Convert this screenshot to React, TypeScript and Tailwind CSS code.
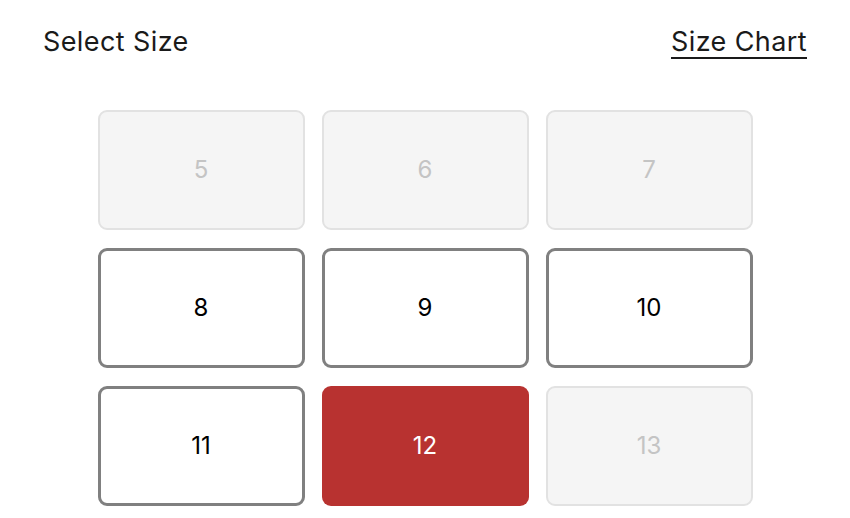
import React, { useState } from "react";

type SizeOption = {
  label: string;
  available: boolean;
};

const sizes: SizeOption[] = [
  { label: "5", available: false },
  { label: "6", available: false },
  { label: "7", available: false },
  { label: "8", available: true },
  { label: "9", available: true },
  { label: "10", available: true },
  { label: "11", available: true },
  { label: "12", available: true },
  { label: "13", available: false },
];

const App: React.FC = () => {
  const [selected, setSelected] = useState("12");

  return (
    <div
      className="w-[850px] h-[518px] bg-white overflow-hidden"
      style={{ fontFamily: "Inter, 'Noto Sans', sans-serif" }}
    >
      <div className="flex items-center justify-between px-[43px] pt-[21px] h-[62px]">
        <h2 className="text-[27px] text-[#1a1a1a] leading-none tracking-[0.4px]">Select Size</h2>
        <button className="text-[27px] text-[#1a1a1a] leading-none underline underline-offset-[6px] decoration-2 tracking-[0.4px]">
          Size Chart
        </button>
      </div>

      <div className="mt-[48px] mx-auto w-[655px] grid grid-cols-3 gap-x-[17px] gap-y-[18px]">
        {sizes.map((s) => {
          const isSelected = s.label === selected;
          let cls =
            "h-[120px] rounded-[9px] flex items-center justify-center text-[24px] ";
          if (!s.available) {
            cls += "bg-[#f5f5f5] border-2 border-[#e2e2e2] text-[#c4c4c4] cursor-not-allowed";
          } else if (isSelected) {
            cls += "bg-[#b83230] text-white";
          } else {
            cls += "bg-white border-[3px] border-[#808080] text-black";
          }
          return (
            <button
              key={s.label}
              disabled={!s.available}
              onClick={() => setSelected(s.label)}
              className={cls}
            >
              {s.label}
            </button>
          );
        })}
      </div>
    </div>
  );
};

export default App;
